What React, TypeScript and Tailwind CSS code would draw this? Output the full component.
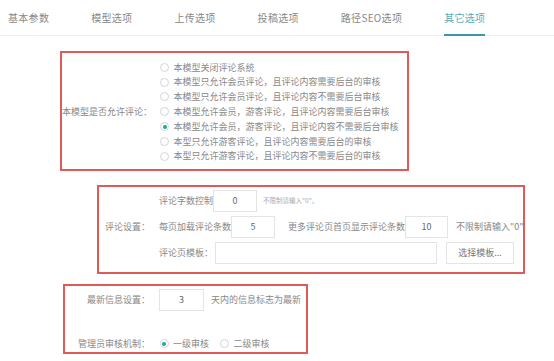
import React from "react";

const tabs = ["基本参数", "模型选项", "上传选项", "投稿选项", "路径SEO选项", "其它选项"];

const commentOptions = [
  "本模型关闭评论系统",
  "本模型只允许会员评论，且评论内容需要后台的审核",
  "本模型只允许会员评论，且评论内容不需要后台审核",
  "本模型允许会员，游客评论，且评论内容需要后台审核",
  "本模型允许会员，游客评论，且评论内容不需要后台审核",
  "本型只允许游客评论，且评论内容需要后台的审核",
  "本型只允许游客评论，且评论内容不需要后台的审核",
];

const Radio: React.FC<{ checked?: boolean }> = ({ checked }) => (
  <span className="flex h-[9px] w-[9px] shrink-0 items-center justify-center rounded-full border border-[#d4d4d4] bg-white">
    {checked && <span className="h-[4px] w-[4px] rounded-full bg-[#1aa99b]" />}
  </span>
);

const TextBox: React.FC<{ value?: string; className?: string }> = ({ value, className }) => (
  <div
    className={`flex h-[22px] shrink-0 items-center justify-center border border-[#e4e4e4] bg-white text-[9px] text-[#666] ${className ?? ""}`}
  >
    {value}
  </div>
);

const App: React.FC = () => {
  const [allow, setAllow] = React.useState(4);
  const [level, setLevel] = React.useState(1);

  return (
    <div
      className="h-[361px] w-[554px] overflow-hidden whitespace-nowrap bg-white text-[#888]"
      style={{ fontFamily: '"Noto Sans CJK SC", "Noto Sans", sans-serif' }}
    >
      {/* 탭 */}
      <div className="flex h-[36px] border-b border-[#eeeeee] pl-[8px]">
        {tabs.map((t, i) => (
          <div
            key={t}
            className={`relative mr-[42px] flex items-center text-[10px] tracking-[0.3px] ${
              i === 5 ? "text-[#5aaab6]" : "text-[#888]"
            }`}
          >
            {t}
            {i === 5 && <span className="absolute -bottom-[1px] left-0 right-0 h-[2px] bg-[#3d98a5]" />}
          </div>
        ))}
      </div>

      {/* 评论开关 */}
      <div className="ml-[60px] mt-[15px] flex w-[349px] items-center border-2 border-[#e05a5a] pb-[5px] pt-[7px]">
        <div className="flex w-[90px] shrink-0 justify-end text-[9px]">本模型是否允许评论：</div>
        <div className="ml-[8px] flex flex-col">
          {commentOptions.map((o, i) => (
            <div
              key={o}
              onClick={() => setAllow(i)}
              className="flex h-[14.8px] cursor-pointer items-center gap-[4.5px] text-[9px]"
            >
              <Radio checked={allow === i} />
              <span>{o}</span>
            </div>
          ))}
        </div>
      </div>

      {/* 评论设置 */}
      <div className="ml-[97px] mt-[14px] flex w-[428px] items-center border-2 border-[#e05a5a] pb-[8px] pt-[3px]">
        <div className="flex w-[51px] shrink-0 justify-end text-[9px]">评论设置：</div>
        <div className="ml-[9px] flex flex-col gap-[4px] text-[9px]">
          <div className="flex items-center">
            <span>评论字数控制</span>
            <TextBox value="0" className="w-[44px]" />
            <span className="ml-[6px] text-[6.5px] text-[#aaa]">不限制请输入"0"。</span>
          </div>
          <div className="flex items-center">
            <span>每页加载评论条数</span>
            <TextBox value="5" className="w-[44px]" />
            <span className="ml-[13px]">更多评论页首页显示评论条数</span>
            <TextBox value="10" className="w-[43px]" />
            <span className="ml-[8px]">不限制请输入"0"</span>
          </div>
          <div className="flex items-center">
            <span>评论页模板：</span>
            <TextBox className="ml-[2px] w-[222px]" />
            <button className="ml-[9px] flex h-[22px] w-[68px] shrink-0 items-center justify-center border border-[#e4e4e4] bg-white text-[9px] text-[#777]">
              选择模板...
            </button>
          </div>
        </div>
      </div>

      {/* 最新信息 */}
      <div className="ml-[63px] mt-[10px] flex w-[245px] flex-col border-2 border-[#e05a5a] pt-[3px]">
        <div className="flex items-center text-[9px]">
          <div className="flex w-[85px] shrink-0 justify-end">最新信息设置：</div>
          <TextBox value="3" className="ml-[9px] w-[45px]" />
          <span className="ml-[7px]">天内的信息标志为最新</span>
        </div>
        <div className="mt-[25px] flex h-[16px] items-center text-[9px]">
          <div className="flex w-[85px] shrink-0 justify-end">管理员审核机制：</div>
          <div onClick={() => setLevel(1)} className="ml-[9.5px] flex cursor-pointer items-center gap-[4.5px]">
            <Radio checked={level === 1} />
            <span>一级审核</span>
          </div>
          <div onClick={() => setLevel(2)} className="ml-[11px] flex cursor-pointer items-center gap-[4.5px]">
            <Radio checked={level === 2} />
            <span>二级审核</span>
          </div>
        </div>
      </div>
    </div>
  );
};

export default App;
